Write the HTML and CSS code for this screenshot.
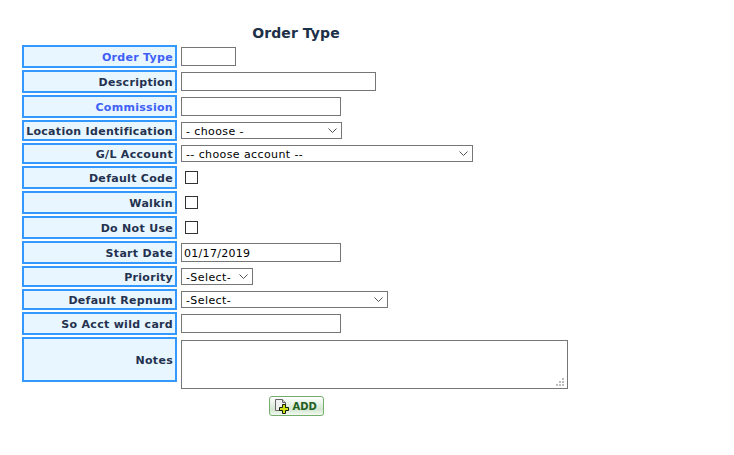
FILE: index.html
```html
<!DOCTYPE html>
<html lang="en">
<head>
    <meta charset="UTF-8">
    <title>Order Type</title>
    <link rel="stylesheet" href="styles.css">
</head>
<body>
    <form class="entry-form">
        <h1 class="form-title">Order Type</h1>
        <div class="form-row">
            <label class="field-label required" for="ordertype">Order Type</label>
            <input class="w-55" type="text" id="ordertype">
        </div>
        <div class="form-row">
            <label class="field-label" for="description">Description</label>
            <input class="w-195" type="text" id="description">
        </div>
        <div class="form-row">
            <label class="field-label required" for="commission">Commission</label>
            <input class="w-160" type="text" id="commission">
        </div>
        <div class="form-row">
            <label class="field-label short" for="location">Location Identification</label>
            <select class="w-161" id="location"><option>- choose -</option></select>
        </div>
        <div class="form-row">
            <label class="field-label short" for="account">G/L Account</label>
            <select class="w-292" id="account"><option>-- choose account --</option></select>
        </div>
        <div class="form-row">
            <label class="field-label" for="defaultcode">Default Code</label>
            <input type="checkbox" id="defaultcode">
        </div>
        <div class="form-row">
            <label class="field-label" for="walkin">Walkin</label>
            <input type="checkbox" id="walkin">
        </div>
        <div class="form-row">
            <label class="field-label" for="donotuse">Do Not Use</label>
            <input type="checkbox" id="donotuse">
        </div>
        <div class="form-row">
            <label class="field-label" for="startdate">Start Date</label>
            <input class="w-160" type="text" id="startdate" value="01/17/2019">
        </div>
        <div class="form-row">
            <label class="field-label short" for="priority">Priority</label>
            <select class="w-72" id="priority"><option>-Select-</option></select>
        </div>
        <div class="form-row">
            <label class="field-label short" for="repnum">Default Repnum</label>
            <select class="w-207" id="repnum"><option>-Select-</option></select>
        </div>
        <div class="form-row">
            <label class="field-label" for="wildcard">So Acct wild card</label>
            <input class="w-160" type="text" id="wildcard">
        </div>
        <div class="form-row notes-row">
            <label class="field-label notes" for="notes">Notes</label>
            <div class="notes-wrap">
                <textarea id="notes"></textarea>
                <svg class="grip" width="8" height="8" viewBox="0 0 8 8">
                    <path d="M6 0h2v2h-2zM3 3h2v2h-2zM6 3h2v2h-2zM0 6h2v2h-2zM3 6h2v2h-2zM6 6h2v2h-2z" fill="#bdbdbd"/>
                </svg>
            </div>
        </div>
        <div class="form-actions">
            <button type="button" class="add-btn">
                <svg width="15" height="15" viewBox="0 0 15 15">
                    <path d="M.5 .5h7l3 3v8h-10z" fill="#efefef" stroke="#666"/>
                    <path d="M7.5 .5v3h3" fill="#cfcfcf" stroke="#666"/>
                    <path d="M7.5 5.5h3v3h3v3h-3v3h-3v-3h-3v-3h3z" fill="#cfe016" stroke="#141f0c"/>
                </svg>
                ADD
            </button>
        </div>
    </form>
</body>
</html>
```

FILE: styles.css
```css
body {
    margin: 0;
    background-color: #fff;
    font-family: "DejaVu Sans", Verdana, sans-serif;
    font-size: 11px;
}

.entry-form {
    width: 548px;
    padding: 25px 0 0 22px;
}

.form-title {
    margin: 0 0 3px 0;
    height: 17px;
    line-height: 17px;
    font-size: 14px;
    font-weight: bold;
    letter-spacing: .1px;
    text-align: center;
    color: #1c3048;
}

.form-row {
    display: flex;
    align-items: center;
    gap: 4px;
    margin-bottom: 2px;
}

.notes-row {
    align-items: flex-start;
}

.field-label {
    box-sizing: border-box;
    flex: none;
    width: 155px;
    height: 23px;
    line-height: 21px;
    padding-right: 2px;
    border: 2px solid #3399ff;
    background-color: #e8f7ff;
    text-align: right;
    font-weight: bold;
    letter-spacing: .3px;
    color: #24324f;
}

.field-label.short {
    height: 21px;
    line-height: 19px;
}

.field-label.required {
    color: #3f5ff5;
}

.field-label.notes {
    height: 45px;
    line-height: 43px;
}

input[type="text"] {
    box-sizing: border-box;
    height: 19px;
    margin: 0;
    padding: 2px 2px 0 2px;
    border: 1px solid #767676;
    font-family: inherit;
    font-size: 11px;
    letter-spacing: .3px;
    color: #000;
}

select {
    appearance: none;
    box-sizing: border-box;
    height: 17px;
    margin: 0;
    padding: 1px 0 0 4px;
    border: 1px solid #767676;
    border-radius: 0;
    background: #fff url("data:image/svg+xml,%3Csvg xmlns='http://www.w3.org/2000/svg' width='9' height='5'%3E%3Cpath d='M.5 .5l4 4 4-4' fill='none' stroke='%23555'/%3E%3C/svg%3E") no-repeat right 4px center;
    font-family: inherit;
    font-size: 11px;
    letter-spacing: .4px;
    color: #000;
}

input[type="checkbox"] {
    appearance: none;
    box-sizing: border-box;
    width: 13px;
    height: 13px;
    margin: 0 0 0 4px;
    border: 1px solid #333;
    background-color: #fff;
}

.notes-wrap {
    position: relative;
    margin-top: 3px;
}

textarea {
    box-sizing: border-box;
    display: block;
    width: 387px;
    height: 49px;
    margin: 0;
    padding: 2px;
    border: 1px solid #767676;
    resize: none;
    font-family: inherit;
    font-size: 11px;
}

.grip {
    position: absolute;
    right: 4px;
    bottom: 3px;
}

.w-55 { width: 55px; }
.w-72 { width: 72px; }
.w-160 { width: 160px; }
.w-161 { width: 161px; }
.w-195 { width: 195px; }
.w-207 { width: 207px; }
.w-292 { width: 292px; }

.form-actions {
    display: flex;
    justify-content: center;
    margin-top: 7px;
}

.add-btn {
    display: flex;
    align-items: center;
    gap: 3px;
    box-sizing: border-box;
    width: 55px;
    height: 20px;
    padding: 0 0 0 5px;
    border: 1px solid #74ad6c;
    border-radius: 3px;
    background: linear-gradient(#fff, #d3e6d0 70%, #f4f9f3);
    font-family: inherit;
    font-size: 10px;
    font-weight: bold;
    color: #1f5f1f;
}
```
